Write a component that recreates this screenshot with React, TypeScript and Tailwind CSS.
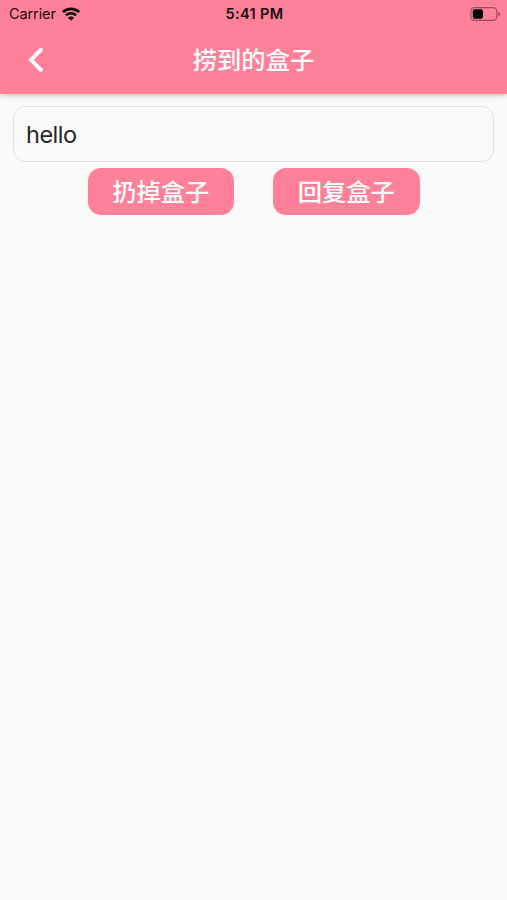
import React from 'react';

type BoxAction = {
    key: string;
    label: string;
};

const actions: BoxAction[] = [
    { key: 'throw', label: '扔掉盒子' },
    { key: 'reply', label: '回复盒子' }
];

function WifiIcon() {
    return (
        <svg width="18" height="14" viewBox="0 0 18 14" fill="none">
            <path d="M0.9 5.1a11.6 11.6 0 0 1 16.2 0" stroke="#140a0c" strokeWidth="2.7" />
            <path d="M3.9 8.4a7.3 7.3 0 0 1 10.2 0" stroke="#140a0c" strokeWidth="2.4" />
            <path d="M9 13.8l-3-3a4.2 4.2 0 0 1 6 0z" fill="#140a0c" />
        </svg>
    );
}

function BatteryIcon() {
    return (
        <svg width="31" height="14" viewBox="0 0 31 14" fill="none">
            <rect x="0.9" y="0.6" width="25.9" height="12.8" rx="3.6" stroke="#9c4c5c" strokeWidth="1.1" />
            <rect x="2.8" y="2.3" width="10.2" height="9.4" rx="2" fill="#000" />
            <path d="M28.2 4.7c1.1.4 1.8 1.2 1.8 2.3s-.7 1.9-1.8 2.3z" fill="#9c4c5c" />
        </svg>
    );
}

function App() {
    return (
        <div className="h-[900px] w-[507px] overflow-hidden bg-[#fafafa] font-['Inter','Noto_Sans_CJK_SC',sans-serif]">
            <header className="h-[94px] bg-[#ff8199] shadow-[0_1px_5px_rgba(0,0,0,0.26)]">
                {/* Status bar */}
                <div className="grid h-[27px] grid-cols-[1fr_auto_1fr] items-center pl-[9px] pr-[7px] text-[#190c0f]">
                    <div className="flex items-center gap-[6px]">
                        <span className="pt-px text-[14.5px] leading-none tracking-[-0.1px]">Carrier</span>
                        <WifiIcon />
                    </div>
                    <span className="pt-[2px] text-center text-[14.5px] font-semibold leading-none tracking-[0.35px]">5:41 PM</span>
                    <div className="-mr-px flex justify-end">
                        <BatteryIcon />
                    </div>
                </div>

                {/* Nav bar */}
                <div className="grid h-[66px] grid-cols-[72px_1fr_72px] items-center text-white">
                    <button className="flex justify-center" aria-label="Back">
                        <svg width="16" height="26" viewBox="0 0 16 26" fill="none">
                            <path d="M12.8 2.8L3 12.8l9.8 10" stroke="#fff" strokeWidth="4" strokeLinecap="round" />
                        </svg>
                    </button>
                    <h1 className="text-center text-[24.3px] font-medium leading-none">捞到的盒子</h1>
                </div>
            </header>

            <main className="px-[13px] pt-3">
                <div className="flex h-14 items-center rounded-xl border border-[#dfe1e1] px-3 pt-[2px] text-[23.5px] tracking-[-0.5px] text-[#262626]">
                    hello
                </div>
                <div className="mt-[6px] flex justify-center gap-[39px]">
                    {actions.map((item) => (
                        <button
                            key={item.key}
                            className="flex h-[47px] w-[146.5px] items-center justify-center rounded-[13px] bg-[#ff8199] pt-px text-[24.3px] font-medium leading-none text-white"
                        >
                            {item.label}
                        </button>
                    ))}
                </div>
            </main>
        </div>
    );
}

export default App;
